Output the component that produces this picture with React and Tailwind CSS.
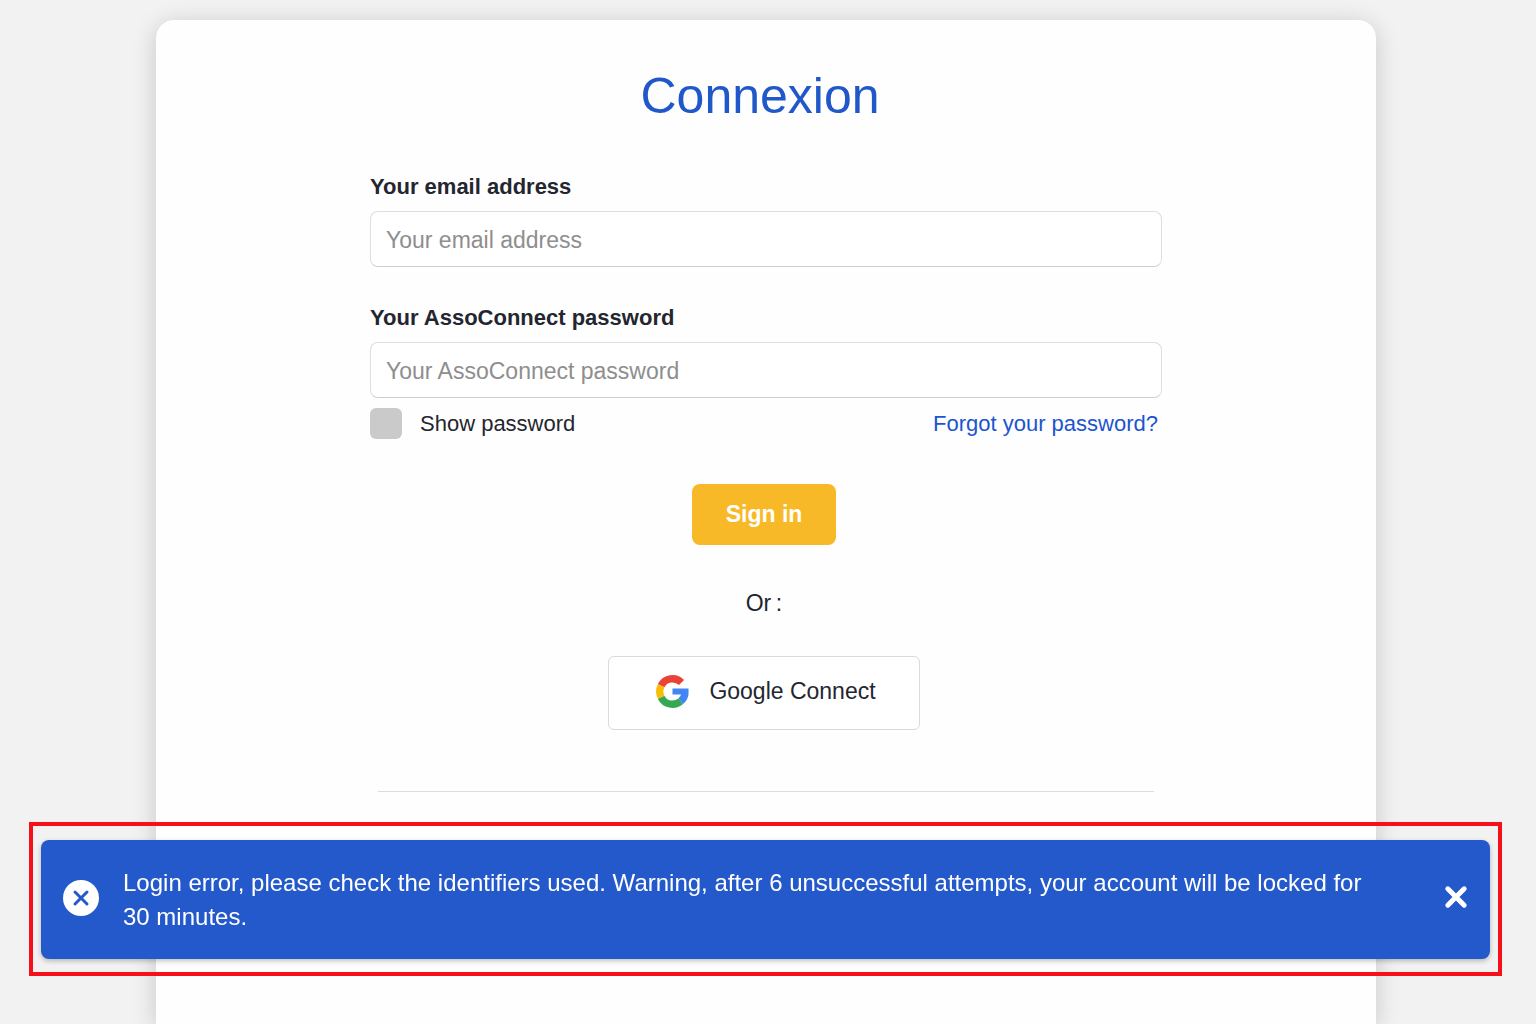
import React, { useState } from 'react';
import { X } from 'lucide-react';

function GoogleLogo() {
  return (
    <svg viewBox="0 0 48 48" className="w-[33px] h-[33px]" fill="none" strokeWidth="10.6" aria-hidden="true">
      <path stroke="#FBBC05" d="M7.5 15.6A18.5 18.5 0 0 0 7.5 32.4" />
      <path stroke="#EA4335" d="M37.1 10.9A18.5 18.5 0 0 0 7.5 15.6" />
      <path stroke="#34A853" d="M7.5 32.4A18.5 18.5 0 0 0 35.9 38.2" />
      <path stroke="#4285F4" d="M35.9 38.2A18.5 18.5 0 0 0 42.2 27" />
      <path fill="#4285F4" d="M24 19.7h23.2q.6 4.4-.2 8.8H24z" />
    </svg>
  );
}

function Field({ id, label, type }) {
  return (
    <div className="flex flex-col gap-[10px]">
      <label htmlFor={id} className="text-[22px] leading-7 font-bold">{label}</label>
      <input
        id={id}
        type={type}
        placeholder={label}
        className="w-full h-14 px-[15px] pt-[2px] text-[23px] bg-white border border-[#dedede] border-b-[#cfcfcf] rounded-lg placeholder:text-[#8e8e8e] focus:outline-none focus:border-[#2158c9]"
      />
    </div>
  );
}

function ErrorBanner({ onClose }) {
  return (
    <div className="fixed left-[29px] right-[34px] bottom-12 border-4 border-[#f5101a] px-2 pt-[14px] pb-[13px]">
      <div role="alert" className="flex items-center rounded-lg bg-[#2359ca] text-white min-h-[119px] pl-[22px] pr-5 shadow-[0_2px_5px_rgba(0,0,0,0.25)]">
        <span className="shrink-0 flex items-center justify-center w-9 h-9 mb-1 rounded-full bg-white text-[#2359ca]">
          <X className="w-6 h-6" strokeWidth={3} />
        </span>
        <p className="flex-1 pl-6 pr-20 text-[24px] leading-[34px]">
          Login error, please check the identifiers used. Warning, after 6 unsuccessful attempts, your account will be locked for 30 minutes.
        </p>
        <button type="button" aria-label="Close" onClick={onClose} className="shrink-0 mb-1.5 cursor-pointer">
          <svg viewBox="0 0 28 28" className="w-7 h-7" fill="none" stroke="currentColor" strokeWidth="5" strokeLinecap="round">
            <path d="M5.8 5.8 22.2 22.2M22.2 5.8 5.8 22.2" />
          </svg>
        </button>
      </div>
    </div>
  );
}

export default function App() {
  const [showPassword, setShowPassword] = useState(false);
  const [showError, setShowError] = useState(true);

  return (
    <div className="min-h-screen flex flex-col bg-[#f2f2f2] pt-5 pr-1 font-['Liberation_Sans',Arial,sans-serif] text-[#24262f]">
      <main className="flex-1 w-full max-w-[1220px] mx-auto bg-[#fefefe] rounded-t-[18px] shadow-[0_4px_24px_rgba(0,0,0,0.18)] px-6 pb-56">
        <form className="max-w-[792px] mx-auto" onSubmit={e => e.preventDefault()}>
          <h1 className="pt-12 pr-3 text-center text-[50px] leading-[56px] text-[#2158c9]">Connexion</h1>

          <div className="mt-[49px] flex flex-col gap-[37px]">
            <Field id="email" label="Your email address" type="email" />
            <Field id="password" label="Your AssoConnect password" type={showPassword ? 'text' : 'password'} />
          </div>

          <div className="mt-[10px] pr-1 flex items-center justify-between text-[22px] leading-[30px]">
            <label className="flex items-center gap-[18px]">
              <input
                type="checkbox"
                checked={showPassword}
                onChange={e => setShowPassword(e.target.checked)}
                className="appearance-none w-8 h-[31px] rounded-md bg-[#cacaca] checked:bg-[#2158c9]"
              />
              Show password
            </label>
            <a href="#forgot" className="text-[#1c55cf]">Forgot your password?</a>
          </div>

          <div className="pr-1 flex flex-col items-center text-[23px]">
            <button type="submit" className="mt-[45px] w-36 h-[61px] rounded-lg bg-[#f7b927] text-white font-bold cursor-pointer">
              Sign in
            </button>
            <p className="mt-10 leading-9">Or&thinsp;:</p>
            <button type="button" className="mt-[35px] pl-1 pb-1 w-[312px] h-[74px] flex items-center justify-center gap-5 rounded-md border border-[#dadada] bg-white cursor-pointer">
              <GoogleLogo />
              Google Connect
            </button>
          </div>

          <hr className="mt-[61px] mx-2 border-[#dcdcdc]" />
        </form>
      </main>

      {showError && <ErrorBanner onClose={() => setShowError(false)} />}
    </div>
  );
}
